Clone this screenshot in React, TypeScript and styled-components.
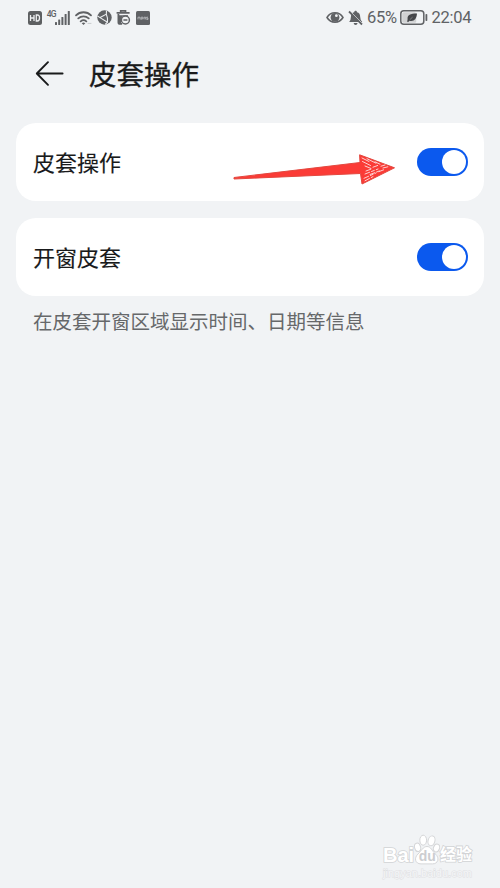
import React from "react";
import styled, { createGlobalStyle } from "styled-components";

const GlobalStyle = createGlobalStyle`
  * { box-sizing: border-box; }
  body { margin: 0; background: #f1f3f5; }
`;

const Screen = styled.main`
  display: flex;
  flex-direction: column;
  height: 888px;
  width: 500px;
  overflow: hidden;
  background: #f1f3f5;
  color: #191a1b;
  font-family: Roboto, "Noto Sans CJK SC", sans-serif;
`;

const StatusBar = styled.header`
  display: flex;
  justify-content: space-between;
  height: 35px;
  padding: 0 28px;
  color: #606265;
`;

const StatusGroup = styled.div<{ $gap: number }>`
  display: flex;
  align-items: center;
  gap: ${(p) => p.$gap}px;
  height: 35px;
  svg { display: block; flex: none; }
`;

const StatusText = styled.span<{ $width: number }>`
  width: ${(p) => p.$width}px;
  font-size: 16.5px;
  line-height: 20px;
  letter-spacing: -0.25px;
  white-space: nowrap;
  padding-top: 1px;
`;

const TitleBar = styled.div`
  display: flex;
  align-items: center;
  gap: 25px;
  height: 78px;
  padding-left: 35px;
  svg { display: block; }
`;

const Title = styled.h1`
  margin: 0;
  padding-top: 3px;
  font-size: 27.5px;
  line-height: 40px;
  font-weight: 400;
  -webkit-text-stroke: 0.35px currentColor;
`;

const Settings = styled.section`
  display: flex;
  flex-direction: column;
  gap: 17px;
  padding: 10px 16px 0;
`;

const Card = styled.div`
  position: relative;
  display: flex;
  align-items: center;
  justify-content: space-between;
  height: 78px;
  padding: 0 16px 0 17px;
  border-radius: 20px;
  background: #fff;
`;

const Label = styled.span`
  font-size: 22px;
  line-height: 32px;
  font-weight: 400;
  -webkit-text-stroke: 0.12px currentColor;
  padding-top: 3px;
`;

const Toggle = styled.button`
  display: flex;
  justify-content: flex-end;
  align-items: center;
  width: 51px;
  height: 28px;
  padding: 0 2px;
  border: 0;
  border-radius: 14px;
  background: #0b59ee;
`;

const Knob = styled.span`
  width: 24px;
  height: 24px;
  border-radius: 50%;
  background: #fff;
`;

const Pointer = styled.svg`
  position: absolute;
  left: 216px;
  top: 29px;
`;

const Hint = styled.p`
  margin: 12px 33px 0;
  font-size: 19.5px;
  line-height: 30px;
  color: #66686a;
  white-space: nowrap;
`;

const Watermark = styled.footer`
  display: flex;
  flex-direction: column;
  align-self: flex-end;
  width: 92px;
  margin: auto 25px 9px 0;
  color: #fff;
`;

const Brand = styled.div`
  display: flex;
  align-items: flex-end;
  height: 34px;
  svg { display: block; flex: none; }
`;

const BrandText = styled.span<{ $width: number; $size: number }>`
  width: ${(p) => p.$width}px;
  font-family: "Liberation Sans", "Noto Sans CJK SC", sans-serif;
  font-size: ${(p) => p.$size}px;
  line-height: 24px;
  font-weight: 700;
  white-space: nowrap;
  -webkit-text-stroke: 1.6px #d2d3d5;
  paint-order: stroke fill;
`;

const Site = styled.span`
  font-family: "Liberation Sans", sans-serif;
  font-size: 11px;
  line-height: 12px;
  letter-spacing: 0.02px;
  color: #f5f6f8;
  -webkit-text-stroke: 1px #dfe0e2;
  paint-order: stroke fill;
`;

const HdIcon = () => (
  <svg width="14" height="14" viewBox="0 0 14 14">
    <rect width="14" height="14" rx="2.5" fill="#5d5f61" />
    <path d="M2.5 4v6M6 4v6M2.5 7H6M8.3 4v6h1c1.4 0 2.2-.9 2.2-3s-.8-3-2.2-3z" fill="none" stroke="#eef0f2" strokeWidth="1.3" />
  </svg>
);

const NetworkLabel = styled.span`
  width: 8px;
  height: 16px;
  margin-right: -4px;
  font-size: 8.5px;
  font-weight: 500;
  line-height: 8px;
  letter-spacing: -0.8px;
`;

const SignalIcon = () => (
  <svg width="15" height="14" viewBox="0 0 15 14" fill="currentColor">
    <rect y="11" width="2" height="3" rx=".5" />
    <rect x="3.2" y="8.5" width="2" height="5.5" rx=".5" />
    <rect x="6.4" y="6" width="2" height="8" rx=".5" />
    <rect x="9.6" y="3" width="2" height="11" rx=".5" />
    <rect x="12.8" width="2" height="14" rx=".5" />
  </svg>
);

const WifiIcon = () => (
  <svg width="17" height="14" viewBox="0 0 17 14" fill="none" stroke="currentColor" strokeWidth="1.8" strokeLinecap="round">
    <path d="M1 4.3C5 .2 12 .2 16 4.3M3.3 7.4c3-2.8 7.4-2.8 10.4 0M5.7 10.4c1.7-1.5 3.9-1.5 5.6 0" />
    <path d="M6.7 12.2q1.8-1.3 3.6 0L8.5 14z" fill="currentColor" stroke="none" />
    <path d="M13 12.4h3" stroke="#c9cbcd" strokeWidth="1" />
  </svg>
);

const BrowserIcon = () => (
  <svg width="15" height="15" viewBox="0 0 15 15">
    <circle cx="7.5" cy="7.5" r="7.2" fill="#606265" />
    <path d="M9.5.7 9.3 4.2 3 7.6 10.5 12.2M9.3 4.2q1.8 3.8 1.2 8L8.2 14.4M3 7.6.6 6" fill="none" stroke="#eceef0" strokeWidth="1.1" />
  </svg>
);

const TrashIcon = () => (
  <svg width="15" height="15" viewBox="0 0 15 15" fill="none" stroke="currentColor">
    <path d="M.6 2.8h13M4.7 2V.8h4.8V2" strokeWidth="1.7" />
    <path d="M2.4 4v8.2q0 1.7 1.7 1.7h2" strokeWidth="1.8" />
    <path d="M2.5 5.2h9.5v1H7L5 9v5H3z" fill="currentColor" stroke="none" />
    <circle cx="9.4" cy="10" r="4" fill="#f1f3f5" strokeWidth="1.5" />
    <path d="M7.4 10h4" strokeWidth="1.5" />
  </svg>
);

const AppIcon = () => (
  <svg width="14" height="14" viewBox="0 0 14 14">
    <rect width="14" height="14" rx="1.5" fill="#606265" />
    <path d="M2 8.4V6.2h2v2.2M5.1 8.8V6.2H7v1.6H5.2M8.1 8.4V6.2h1.5v2.2M12 6.2h-1.4v1H12v1.2h-1.6" fill="none" stroke="#c2c4c6" strokeWidth=".8" />
  </svg>
);

const EyeIcon = () => (
  <svg width="18" height="14" viewBox="0 0 18 14">
    <path d="M1 6.5C4.7.3 13.3.3 17 6.5 13.3 12.7 4.7 12.7 1 6.5z" fill="#f1f3f5" stroke="#606265" strokeWidth="1.5" />
    <circle cx="9" cy="6.4" r="4.4" fill="#606265" />
    <circle cx="10.4" cy="4.7" r="1.4" fill="#f1f3f5" />
  </svg>
);

const BellOffIcon = () => (
  <svg width="15" height="16" viewBox="0 0 15 16">
    <path d="M6.2 2.3C6.2.3 9 .3 9 2.3q3.2.7 3.2 4.7 0 3 2 5H1.2q1.7-1.8 1.7-5 0-4 3.3-4.7zM5.6 13h4q-.3 2-2 2t-2-2z" fill="#606265" />
    <path d="M2.2 1.2 14 13" stroke="#f1f3f5" strokeWidth="1" />
    <path d="m1 1.5 13 13" stroke="#606265" strokeWidth="1.8" />
  </svg>
);

const BatteryIcon = () => (
  <svg width="28" height="15" viewBox="0 0 28 15">
    <rect x=".8" y=".8" width="23" height="13.4" rx="3" fill="#f1f3f5" stroke="#606265" strokeWidth="1.5" />
    <rect x="2.2" y="2.2" width="14" height="10.6" rx="1.5" fill="#d1d2d3" />
    <path d="M7.6 9.3C7 4.8 10.4 3.6 17 3.5c-.2 5.2-3.2 8.6-7.6 7.2L8 12.2l-.8-.7z" fill="#45474a" />
    <path d="m9.8 9.7 2.8-2.6" stroke="#b5b7b9" strokeWidth=".5" />
    <rect x="25.5" y="4" width="1.8" height="7" rx=".8" fill="#606265" />
  </svg>
);

const BackIcon = () => (
  <svg width="29" height="28" viewBox="0 0 29 28" fill="none" stroke="#191a1b" strokeWidth="1.9" strokeLinecap="round" strokeLinejoin="round">
    <path d="M13 2.2 1.8 13.5 13 24.8M2 13.5h25.6" />
  </svg>
);

const RedArrow = () => (
  <Pointer width="166" height="36" viewBox="0 0 166 36">
    <path d="M2 25.5 128 10.5 127.6 2.8 162.5 15.8 130 32 128.5 21.5 2 27z" fill="#fb3b36" stroke="#e3483f" strokeWidth="1" strokeLinejoin="round" />
    <g stroke="#fff" strokeWidth=".9" strokeLinecap="round" opacity=".85">
      <path d="m130 6 7 3.5M130.5 9.5l8 4M135 6.7l9 4.5M143 9.8l5 2.4M133 14l6 2.5" />
      <path d="m134 19 6-2.2M141 15.2l6-2.2M133 22l13-5M149 14.2l4-1.2M138 22.5l11-4.2M151 16l6-1.5M132 26.3l12-5.3M147 19.6l6-2.3M133 28.8l8-4.2" strokeDasharray="5 2 3 2" />
    </g>
  </Pointer>
);

const PawIcon = () => (
  <svg width="26" height="33" viewBox="0 0 26 33">
    <g fill="#fff" stroke="#d5d6d8" strokeWidth="1">
      <ellipse cx="9.2" cy="6.2" rx="3.4" ry="5" />
      <ellipse cx="17.5" cy="6.8" rx="3.4" ry="5" transform="rotate(15 17.5 6.8)" />
      <ellipse cx="3.6" cy="13.3" rx="3" ry="4.3" transform="rotate(-15 3.6 13.3)" />
      <ellipse cx="22.5" cy="14" rx="3" ry="4" transform="rotate(20 22.5 14)" />
      <path d="M13 12.5c4 0 5 4.4 8.2 7.3 5 4.4 2.7 10.1-2.7 10.1H7c-6 0-7.2-6-3-9.9 3.5-3.1 5-7.5 9-7.5z" />
    </g>
    <text x="4.8" y="27.3" fill="#cccdd0" fontFamily="Liberation Sans, sans-serif" fontWeight="700" fontSize="14">du</text>
  </svg>
);

const SettingRow = ({ label, children }: { label: string; children?: React.ReactNode }) => (
  <Card>
    <Label>{label}</Label>
    {children}
    <Toggle role="switch" aria-checked="true" aria-label={label}>
      <Knob />
    </Toggle>
  </Card>
);

export default function App() {
  return (
    <Screen>
      <GlobalStyle />
      <StatusBar>
        <StatusGroup $gap={4.7}>
          <HdIcon />
          <NetworkLabel>4G</NetworkLabel>
          <SignalIcon />
          <WifiIcon />
          <BrowserIcon />
          <TrashIcon />
          <AppIcon />
        </StatusGroup>
        <StatusGroup $gap={4}>
          <EyeIcon />
          <BellOffIcon />
          <StatusText $width={28.5}>65%</StatusText>
          <BatteryIcon />
          <StatusText $width={40.5}>22:04</StatusText>
        </StatusGroup>
      </StatusBar>
      <TitleBar>
        <BackIcon />
        <Title>皮套操作</Title>
      </TitleBar>
      <Settings>
        <SettingRow label="皮套操作">
          <RedArrow />
        </SettingRow>
        <SettingRow label="开窗皮套" />
      </Settings>
      <Hint>在皮套开窗区域显示时间、日期等信息</Hint>
      <Watermark>
        <Brand>
          <BrandText $width={31} $size={20}>Bai</BrandText>
          <PawIcon />
          <BrandText $width={32} $size={16}>经验</BrandText>
        </Brand>
        <Site>jingyan.baidu.com</Site>
      </Watermark>
    </Screen>
  );
}
